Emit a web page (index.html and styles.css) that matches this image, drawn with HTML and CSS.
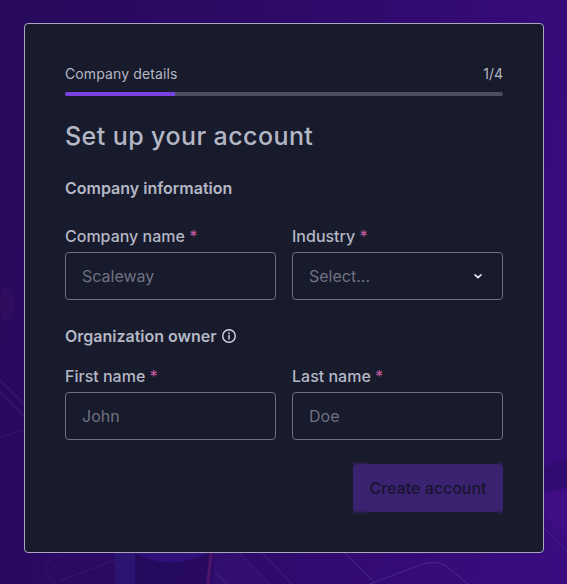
FILE: index.html
```html
<!DOCTYPE html>
<html lang="en">
<head>
  <meta charset="UTF-8">
  <title>Set up your account</title>
  <link rel="stylesheet" href="styles.css">
</head>
<body>

  <svg class="backdrop" width="567" height="584" viewBox="0 0 567 584" fill="none">
    <ellipse cx="7" cy="304" rx="7" ry="18" fill="#5a1f5e" opacity="0.18"/>
    <path d="M0 380 L24 404 M0 392 L24 416" stroke="#6a5fb0" stroke-width="3" opacity="0.12"/>
    <path d="M0 437 L24 430" stroke="#6a5fb0" stroke-width="2" opacity="0.1"/>
    <path d="M62 555 Q42 560 46 572 Q48 580 56 584 M60 581 L115 560" stroke="#7a5fc0" opacity="0.16"/>
    <path d="M115 553 H135 V584 H115 Z" fill="#2b2a8a" opacity="0.35"/>
    <path d="M135 553 H210 L205 584 H135 Z" fill="#230a5a" opacity="0.6"/>
    <path d="M135 553 Q170 572 208 553 Z" fill="#36128a" opacity="0.6"/>
    <path d="M211 553 L208 584" stroke="#6b1f6a" stroke-width="3" opacity="0.5"/>
    <path d="M214 553 H240 L268 584 H214 Z" fill="#3c1a80" opacity="0.25"/>
    <path d="M240 553 L270 584 M214 572 L228 584 M262 553 L292 584" stroke="#7a5fc0" opacity="0.25"/>
    <path d="M345 553 L372 580 M370 584 L420 565 Q435 560 445 565 L468 584" stroke="#7a5fc0" opacity="0.35"/>
    <path d="M544 528 L567 552" stroke="#7a5fc0" opacity="0.25"/>
    <path d="M544 468 Q555 462 567 458 V488 L544 492 Z" fill="#2a0a60" opacity="0.45"/>
    <path d="M544 492 L567 488 V540 L544 515 Z" fill="#4a1090" opacity="0.35"/>
  </svg>

  <main class="card">
    <div class="progress-head">
      <span class="step-name">Company details</span>
      <span>1/4</span>
    </div>
    <div class="progress"><div class="progress-fill"></div></div>

    <h1>Set up your account</h1>

    <h2 class="section-first">Company information</h2>
    <div class="row">
      <div class="field">
        <label>Company name <span class="req">*</span></label>
        <div class="input placeholder">Scaleway</div>
      </div>
      <div class="field">
        <label>Industry <span class="req">*</span></label>
        <div class="input placeholder select">
          <span>Select...</span>
          <svg width="16" height="16" viewBox="0 0 16 16" fill="none">
            <path d="M5 6.8 L8 9.6 L11 6.8" stroke="#e4e5ea" stroke-width="1.6" stroke-linecap="round" stroke-linejoin="round"/>
          </svg>
        </div>
      </div>
    </div>

    <h2 class="section-second">
      Organization owner
      <svg width="16" height="16" viewBox="0 0 16 16" fill="none">
        <circle cx="8" cy="8" r="6.3" stroke="#d3d5dd" stroke-width="1.4"/>
        <circle cx="8" cy="5.2" r="0.9" fill="#d3d5dd"/>
        <path d="M8 7.6 V11" stroke="#d3d5dd" stroke-width="1.5" stroke-linecap="round"/>
      </svg>
    </h2>
    <div class="row">
      <div class="field">
        <label>First name <span class="req">*</span></label>
        <div class="input placeholder">John</div>
      </div>
      <div class="field">
        <label>Last name <span class="req">*</span></label>
        <div class="input placeholder">Doe</div>
      </div>
    </div>

    <div class="actions">
      <button class="btn" type="button">Create account</button>
    </div>
  </main>

</body>
</html>
```

FILE: styles.css
```css
* {
  box-sizing: border-box;
}
body {
  margin: 0;
  width: 567px;
  height: 584px;
  overflow: hidden;
  padding: 23px 0 0 24px;
  font-family: Inter, "Liberation Sans", sans-serif;
  background: linear-gradient(100deg, #26095c 0%, #2c0a66 40%, #3a0c80 100%);
  position: relative;
}
.backdrop {
  position: absolute;
  left: 0;
  top: 0;
}
.card {
  position: relative;
  width: 520px;
  height: 530px;
  padding: 40px;
  background: #181b2b;
  border: 1px solid #a9a6bd;
  border-radius: 4px;
  color: #b4b7c5;
}
.progress-head {
  display: flex;
  justify-content: space-between;
  font-size: 14px;
  line-height: 20px;
}
.step-name {
  letter-spacing: 0.12px;
}
.progress {
  height: 4px;
  margin-top: 8px;
  background: #4c4e5c;
  border-radius: 2px;
  overflow: hidden;
}
.progress-fill {
  width: 25%;
  height: 100%;
  background: #7a42e0;
}
h1 {
  margin: 24px 0 0;
  font-size: 25px;
  line-height: 32px;
  font-weight: 500;
  letter-spacing: 0.42px;
  color: #b4b7c5;
}
h2 {
  margin: 0;
  display: flex;
  align-items: center;
  gap: 4px;
  font-size: 16px;
  line-height: 24px;
  font-weight: 600;
  color: #b4b7c5;
}
.section-first {
  margin-top: 24px;
}
.section-second {
  margin-top: 24px;
}
.row {
  display: grid;
  grid-template-columns: 211px 211px;
  gap: 16px;
  margin-top: 16px;
}
.section-first + .row {
  margin-top: 24px;
}
.field label {
  display: block;
  font-size: 16px;
  line-height: 24px;
  font-weight: 500;
  color: #b4b7c5;
}
.req {
  color: #c1589e;
}
.input {
  height: 48px;
  margin-top: 4px;
  padding: 0 16px;
  display: flex;
  align-items: center;
  border: 1px solid #6e7080;
  border-radius: 4px;
  font-size: 16px;
}
.placeholder {
  color: #6f7181;
}
.select {
  justify-content: space-between;
}
.actions {
  display: flex;
  justify-content: flex-end;
  margin-top: 24px;
}
.btn {
  position: relative;
  width: 150px;
  height: 48px;
  border: 0;
  border-radius: 4px;
  background: #3b2270;
  color: #17142f;
  font-family: inherit;
  font-size: 16px;
  font-weight: 500;
}
/* smeared corners above and below the button */
.btn::before,
.btn::after {
  content: "";
  position: absolute;
  top: -3px;
  bottom: -3px;
  background: linear-gradient(#181b2b, #2c1f55 3px, transparent 4px, transparent 48px, #2c1f55 51px, #181b2b);
}
.btn::before {
  left: 0;
  width: 14px;
}
.btn::after {
  right: 0;
  width: 6px;
}
```
